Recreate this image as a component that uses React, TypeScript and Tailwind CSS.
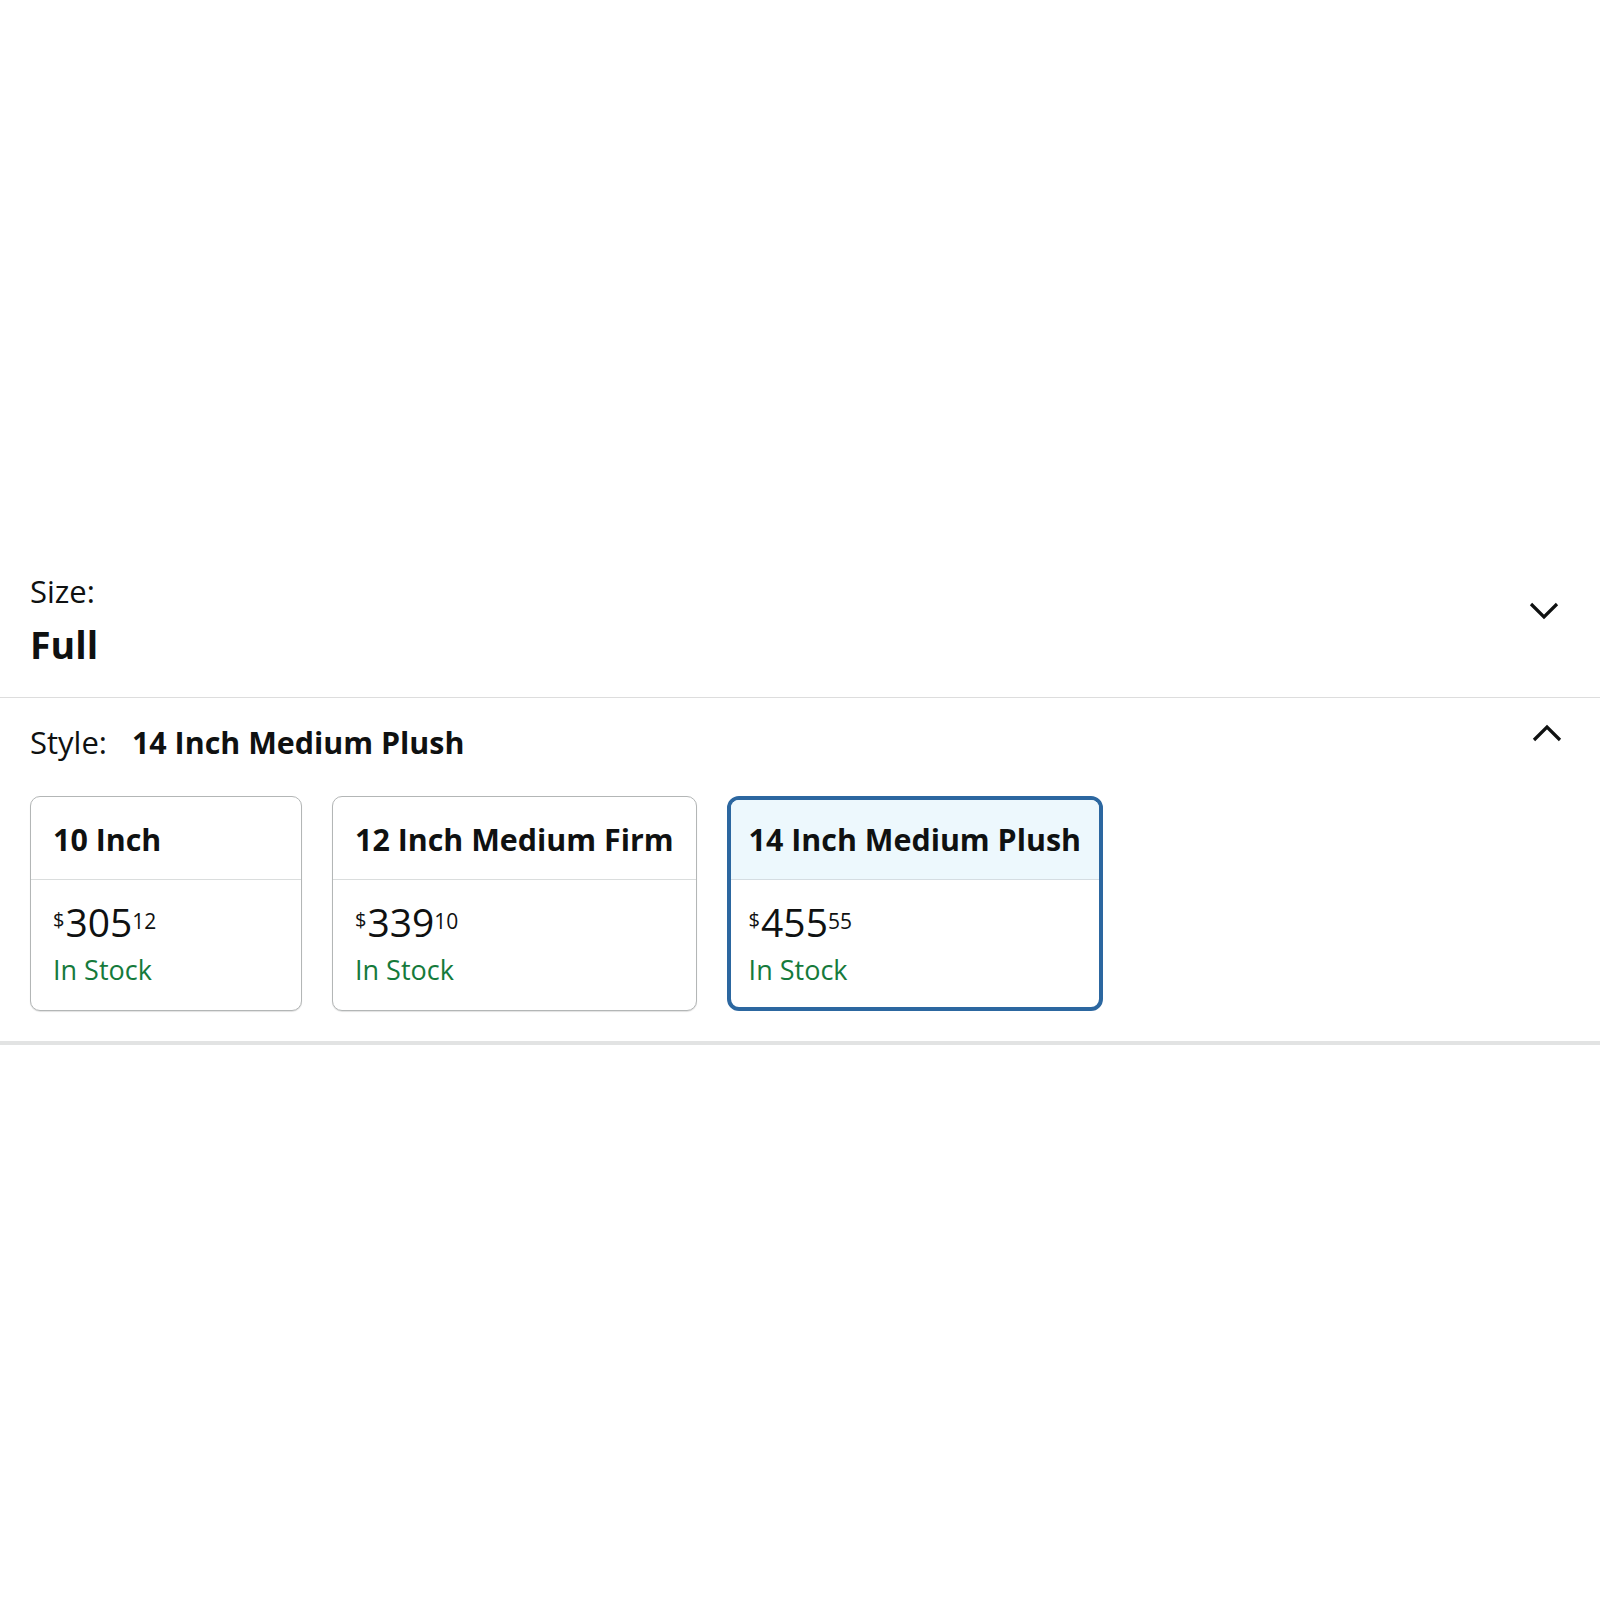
import React from "react";

type Opt = { title: string; dollars: string; cents: string; selected?: boolean; minW?: boolean };

const options: Opt[] = [
  { title: "10 Inch", dollars: "305", cents: "12", minW: true },
  { title: "12 Inch Medium Firm", dollars: "339", cents: "10" },
  { title: "14 Inch Medium Plush", dollars: "455", cents: "55", selected: true },
];

function Price({ o }: { o: Opt }) {
  return (
    <div className="flex items-start leading-none">
      <span className="mt-[8px] text-[20px] leading-none">$</span>
      <span className="ml-[1px] text-[39px] leading-none">{o.dollars}</span>
      <span className="mt-[9px] text-[21px] leading-none">{o.cents}</span>
    </div>
  );
}

function Card({ o }: { o: Opt }) {
  if (o.selected) {
    return (
      <div className="overflow-hidden rounded-[12px] border-[4px] border-[#2c67a0] bg-white">
        <div className="border-b border-[#d5dde2] bg-[#edf8fd] px-[18px] pt-[20px] pb-[19px]">
          <div className="whitespace-nowrap text-[30.4px] font-bold leading-[40px]">{o.title}</div>
        </div>
        <div className="px-[18px] pt-[22.5px] pb-[23.5px]">
          <Price o={o} />
          <div className="mt-[15px] text-[27px] leading-none text-[#157a3b]">In Stock</div>
        </div>
      </div>
    );
  }
  return (
    <div
      className={
        o.minW
          ? "min-w-[272px] overflow-hidden rounded-[10px] border border-[#b3b6b6] bg-white shadow-[0_1px_1px_rgba(0,0,0,0.12)]"
          : "overflow-hidden rounded-[10px] border border-[#b3b6b6] bg-white shadow-[0_1px_1px_rgba(0,0,0,0.12)]"
      }
    >
      <div className="border-b border-[#dadddd] px-[22px] pt-[23px] pb-[19px]">
        <div className="whitespace-nowrap text-[30.4px] font-bold leading-[40px]">{o.title}</div>
      </div>
      <div className="px-[22px] pt-[22.5px] pb-[26.5px]">
        <Price o={o} />
        <div className="mt-[15px] text-[27px] leading-none text-[#157a3b]">In Stock</div>
      </div>
    </div>
  );
}

export default function App() {
  return (
    <div className="min-h-[1600px] bg-white font-['Open_Sans',sans-serif] text-[#0f1111]">
      <div className="h-[545px]" />
      <section className="flex items-start justify-between pl-[30px] pr-[41px] pt-[30.5px] pb-[33.8px]">
        <div>
          <div className="text-[31px] leading-none">Size:</div>
          <div className="mt-[19.2px] text-[37.5px] font-bold leading-none">Full</div>
        </div>
        <svg className="mt-[25px]" width="30" height="20" viewBox="0 0 30 20" fill="none">
          <polyline points="2,3 15,16 28,3" stroke="#0f1111" strokeWidth="3.2" strokeLinejoin="miter" />
        </svg>
      </section>
      <div className="h-px bg-[#dddddd]" />
      <section className="pl-[30px] pt-[29.5px] pb-[30px]">
        <div className="flex items-start justify-between pr-[38px]">
          <div className="flex items-baseline">
            <span className="text-[31px] leading-none">Style:</span>
            <span className="ml-[25px] text-[30.4px] font-bold leading-none">14 Inch Medium Plush</span>
          </div>
          <svg className="-mt-[4px]" width="30" height="20" viewBox="0 0 30 20" fill="none">
            <polyline points="2,17 15,4 28,17" stroke="#0f1111" strokeWidth="3.2" strokeLinejoin="miter" />
          </svg>
        </div>
        <div className="mt-[37px] flex items-start gap-[30px]">
          {options.map((o) => (
            <Card key={o.title} o={o} />
          ))}
        </div>
      </section>
      <div className="h-[4px] bg-[#e2e3e3]" />
    </div>
  );
}
